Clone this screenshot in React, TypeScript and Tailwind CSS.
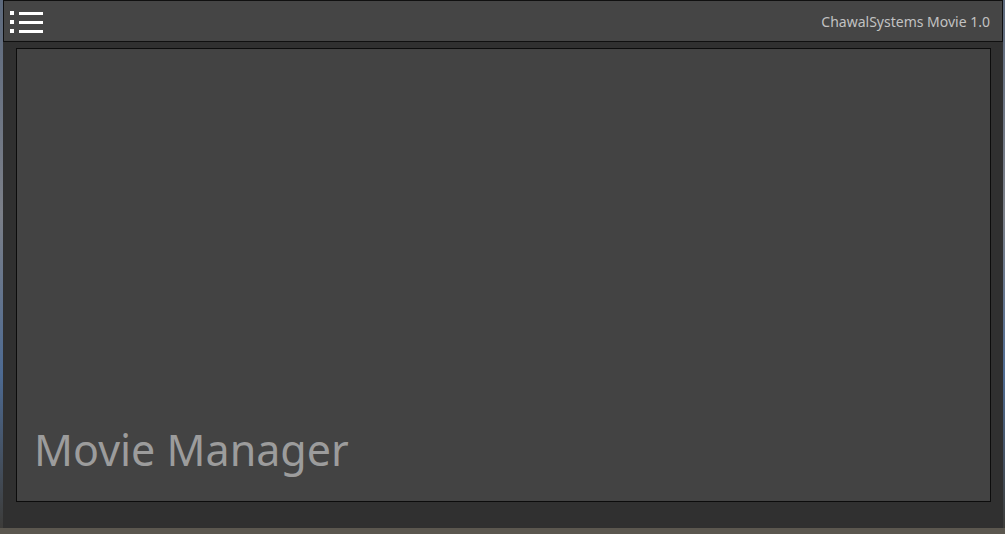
export default function App() {
  return (
    <div className="relative h-[534px] w-[1005px] overflow-hidden bg-[linear-gradient(180deg,#5d6a7e_0%,#7b7f88_40%,#4d6a92_70%,#3c3a36_100%)]">
      {/* window */}
      <div className="ml-[3px] flex h-[528px] w-[1000px] flex-col bg-[#303030]">
        {/* title bar */}
        <div className="flex h-[42px] shrink-0 items-center justify-between border border-[#101010] bg-[#454545] pl-[6px] pr-[12px]">
          <button type="button" className="flex flex-col gap-[5px] pt-[2px]">
            {[0, 1, 2].map((i) => (
              <span key={i} className="flex items-center gap-[5px]">
                <span className="h-[4px] w-[4px] bg-white" />
                <span className="h-[3px] w-[24px] bg-white" />
              </span>
            ))}
          </button>
          <span className="pt-[1px] font-['Noto_Sans',sans-serif] text-[14px] text-[#c2c2c2]">
            ChawalSystems Movie 1.0
          </span>
        </div>

        {/* content panel */}
        <div className="ml-[13px] mr-[12px] mt-[6px] flex h-[454px] flex-col justify-end border border-[#0c0c0c] bg-[#434343] px-[17px] pb-[30px]">
          <h1 className="font-['Noto_Sans',sans-serif] text-[43px] leading-none text-[#9c9c9c]">
            Movie Manager
          </h1>
        </div>
      </div>
      <div className="h-[6px] w-full bg-[#5b574f]" />
    </div>
  );
}
